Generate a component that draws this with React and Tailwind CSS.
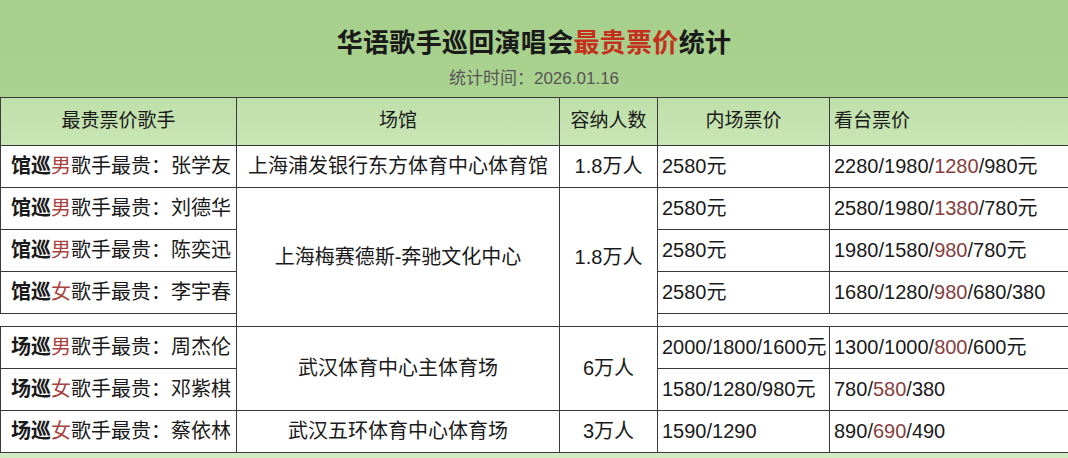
import React from 'react';

const font = { fontFamily: '"Liberation Sans", "Noto Sans CJK SC", sans-serif' };

// 艺人行：巡演类型 / 性别 / 名字
const Singer = ({ tour, gender, name }) => (
  <span>
    <span className="font-semibold">{tour}</span>
    <span className="text-[#a8433f]">{gender}</span>
    歌手最贵：{name}
  </span>
);

// 看台票价，第三个价格标红
const Stand = ({ parts }) => (
  <span>
    {parts.map((p, i) => (
      <React.Fragment key={i}>
        {i > 0 && '/'}
        <span className={i === parts.length - 2 && parts.length > 3 ? 'text-[#864040]' : i === 1 && parts.length === 3 ? 'text-[#864040]' : ''}>{p}</span>
      </React.Fragment>
    ))}
  </span>
);

const td = 'border border-[#3a3a3a] h-[42px] p-0 align-middle';

export default function App() {
  return (
    <div className="w-[1068px] h-[458px] overflow-hidden bg-white text-[#1a1a1a]" style={font}>
      {/* 标题区 */}
      <div className="h-[98px] bg-gradient-to-b from-[#a6cf8b] to-[#aad290] flex flex-col items-center border-b border-[#3a3a3a]">
        <div className="mt-[26px] text-[26px] font-bold leading-[34px] tracking-[0.3px]">
          华语歌手巡回演唱会<span className="text-[#c4301c]">最贵票价</span>统计
        </div>
        <div className="mt-[9px] text-[17px] leading-[20px] text-[#555555]">统计时间：2026.01.16</div>
      </div>

      <table className="border-collapse table-fixed w-[1068px] text-[20px] leading-[24px]">
        <colgroup>
          <col className="w-[236px]" />
          <col className="w-[323px]" />
          <col className="w-[98px]" />
          <col className="w-[172px]" />
          <col className="w-[239px]" />
        </colgroup>
        <thead>
          <tr className="bg-gradient-to-b from-[#bfdfaa] to-[#c8e6b4] text-[19px]">
            <th className="border border-t-0 border-[#3a3a3a] h-[47px] font-normal text-center">最贵票价歌手</th>
            <th className="border border-t-0 border-[#3a3a3a] font-normal text-center">场馆</th>
            <th className="border border-t-0 border-[#3a3a3a] font-normal text-center">容纳人数</th>
            <th className="border border-t-0 border-[#3a3a3a] font-normal text-center">内场票价</th>
            <th className="border border-t-0 border-[#3a3a3a] font-normal text-left pl-[4px]">看台票价</th>
          </tr>
        </thead>
        <tbody>
          <tr>
            <td className={`${td} pl-[10px]`}><Singer tour="馆巡" gender="男" name="张学友" /></td>
            <td className={`${td} text-center whitespace-nowrap`}>上海浦发银行东方体育中心体育馆</td>
            <td className={`${td} text-center`}>1.8万人</td>
            <td className={`${td} pl-[4px]`}>2580元</td>
            <td className={`${td} pl-[4px]`}><Stand parts={['2280', '1980', '1280', '980元']} /></td>
          </tr>
          <tr>
            <td className={`${td} pl-[10px]`}><Singer tour="馆巡" gender="男" name="刘德华" /></td>
            <td className={`${td} text-center`} rowSpan={4}>上海梅赛德斯-奔驰文化中心</td>
            <td className={`${td} text-center`} rowSpan={4}>1.8万人</td>
            <td className={`${td} pl-[4px]`}>2580元</td>
            <td className={`${td} pl-[4px]`}><Stand parts={['2580', '1980', '1380', '780元']} /></td>
          </tr>
          <tr>
            <td className={`${td} pl-[10px]`}><Singer tour="馆巡" gender="男" name="陈奕迅" /></td>
            <td className={`${td} pl-[4px]`}>2580元</td>
            <td className={`${td} pl-[4px]`}><Stand parts={['1980', '1580', '980', '780元']} /></td>
          </tr>
          <tr>
            <td className={`${td} pl-[10px]`}><Singer tour="馆巡" gender="女" name="李宇春" /></td>
            <td className={`${td} pl-[4px]`}>2580元</td>
            <td className={`${td} pl-[4px] whitespace-nowrap`}>
              1680/1280/<span className="text-[#864040]">980</span>/680/380
            </td>
          </tr>
          <tr>
            <td colSpan={5} className="border-y border-[#3a3a3a] h-[13px] p-0" />
          </tr>
          <tr>
            <td className={`${td} pl-[10px]`}><Singer tour="场巡" gender="男" name="周杰伦" /></td>
            <td className={`${td} text-center`} rowSpan={2}>武汉体育中心主体育场</td>
            <td className={`${td} text-center`} rowSpan={2}>6万人</td>
            <td className={`${td} pl-[4px] whitespace-nowrap`}>2000/1800/1600元</td>
            <td className={`${td} pl-[4px]`}><Stand parts={['1300', '1000', '800', '600元']} /></td>
          </tr>
          <tr>
            <td className={`${td} pl-[10px]`}><Singer tour="场巡" gender="女" name="邓紫棋" /></td>
            <td className={`${td} pl-[4px]`}>1580/1280/980元</td>
            <td className={`${td} pl-[4px]`}><Stand parts={['780', '580', '380']} /></td>
          </tr>
          <tr>
            <td className={`${td} pl-[10px]`}><Singer tour="场巡" gender="女" name="蔡依林" /></td>
            <td className={`${td} text-center`}>武汉五环体育中心体育场</td>
            <td className={`${td} text-center`}>3万人</td>
            <td className={`${td} pl-[4px]`}>1590/1290</td>
            <td className={`${td} pl-[4px]`}><Stand parts={['890', '690', '490']} /></td>
          </tr>
        </tbody>
      </table>
      <div className="h-[20px] bg-gradient-to-b from-[#d4ecc6] to-[#c2e3ae]" />
    </div>
  );
}
